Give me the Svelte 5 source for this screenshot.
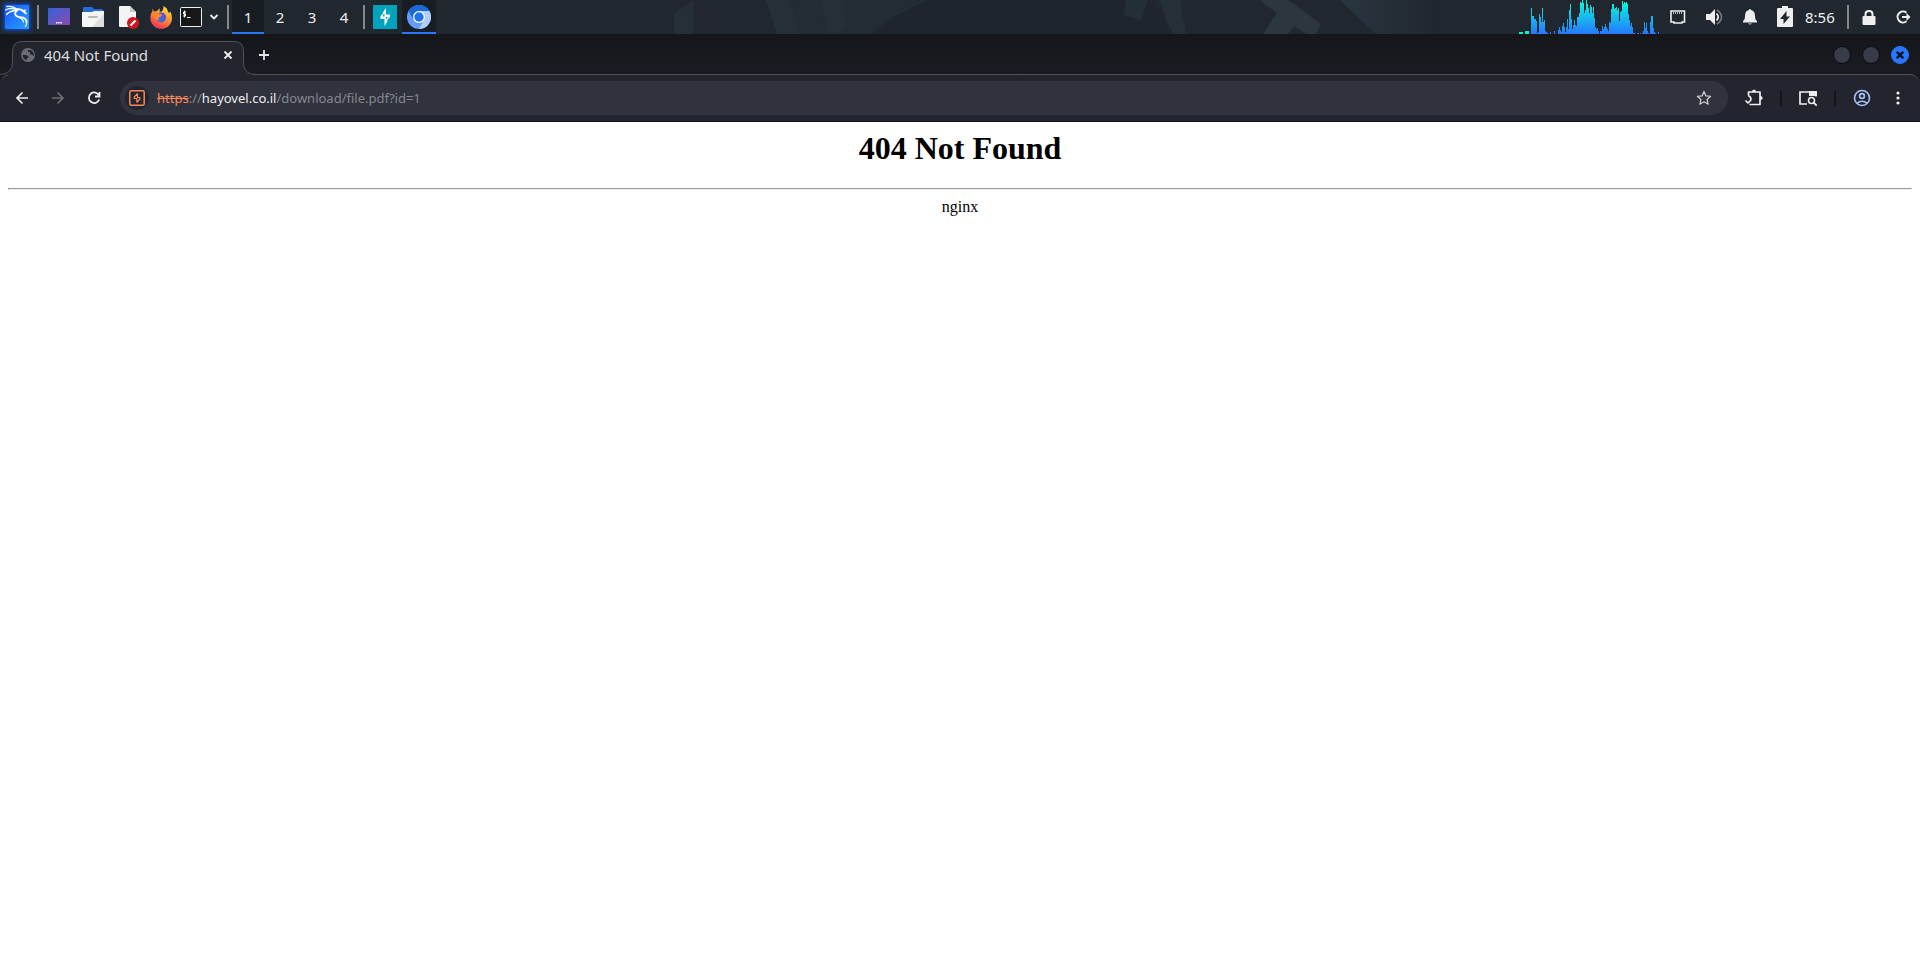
<script>
  // CPU graph samples, one pixel column each
  const load = [
    2, 2, 2, 2, 0, 0, 3, 3, 3, 3, 0, 0, 26, 18, 18, 15, 15, 13, 1, 2, 20, 17, 12, 26, 12, 14, 3, 2, 1, 0, 0, 2,
    0, 0, 0, 3, 0, 0, 0, 4, 7, 4, 2, 8, 11, 7, 2, 7, 15, 5, 24, 30, 15, 5, 9, 14, 9, 8, 17, 17, 21, 32, 31, 34,
    31, 21, 24, 34, 30, 26, 21, 29, 27, 21, 27, 16, 7, 5, 6, 3, 0, 3, 3, 8, 5, 7, 10, 7, 5, 3, 12, 11, 25, 30,
    30, 25, 26, 27, 24, 26, 13, 22, 23, 33, 30, 32, 31, 32, 30, 20, 14, 8, 11, 7, 1, 1, 0, 0, 1, 1, 0, 1, 0, 1,
    3, 12, 6, 11, 3, 1, 0, 12, 18, 18, 6, 2, 1, 0, 0, 2,
  ];

  const workspaces = [1, 2, 3, 4];
  let workspace = $state(1);
  let url = $state('https://hayovel.co.il/download/file.pdf?id=1');

  // Split the address so that scheme, host and path get their own colours
  let parts = $derived(url.match(/^(https?)?(:\/\/)?([^/]*)(.*)$/) ?? []);
</script>

<div class="desktop">
  <header class="panel">
    <svg class="wallpaper" width="1920" height="34" aria-hidden="true">
      <defs>
        <linearGradient id="ridge"><stop stop-color="#293640" /><stop offset="1" stop-color="#20262e" /></linearGradient>
      </defs>
      <path fill="#212d32" d="M790 0h140q-34 12-58 34h-72Z" />
      <path fill="#242f37" d="M674 14 693 0V34H674ZM766 0h24l10 34h-23ZM820 0h20l8 25-19 13ZM1160 0h20l6 34h-16Z" />
      <path fill="#1e252d" d="M872 34Q896 12 930 0h219q16 14 24 34Z" />
      <path fill="#242e36" d="M1126 0h22l-7 21-17-6Z" />
      <path fill="#2c363f" d="M1259 0h29l33 24-5 10h-10l-12-8-6 8h-25l14-21Z" />
      <path fill="url(#ridge)" d="M1340 0h100v34h-64Z" />
    </svg>

    <button class="launcher" aria-label="Applications">
      <svg width="34" height="34" viewBox="0 0 34 34">
        <defs>
          <linearGradient id="kali" x2="1" y2="1"><stop stop-color="#1558ff" /><stop offset="1" stop-color="#2aa0ff" /></linearGradient>
          <filter id="glow" x="-30%" y="-30%" width="160%" height="160%"><feGaussianBlur stdDeviation="2" /></filter>
        </defs>
        <rect x="4" y="4" width="26" height="26" fill="#0c52e8" filter="url(#glow)" />
        <rect x="5" y="5" width="24" height="24" rx="1" fill="url(#kali)" />
        <g fill="none" stroke="#fff" stroke-linecap="round">
          <path stroke-width="1.300" d="M7 6.500Q13 5.500 18 10M5.500 10Q11 7 17 10M6.500 14.500Q10 10.500 17 10.500" />
          <path stroke-width="1.800" d="M16 9.500Q20.500 8.500 23 11L26 13.500M22.500 11l2.500-.5" />
          <path stroke-width="1.900" d="M17 10.500Q13.500 13.500 16.500 16Q18.500 17.500 22 17.500Q26.500 18.500 26.500 22" />
          <path stroke-width="1.200" d="M26.500 21Q27 24 25.500 26.500M19 17.500Q23 19 23.500 22" />
        </g>
      </svg>
    </button>
    <span class="divider"></span>
    <button class="launcher" aria-label="Show desktop">
      <svg width="24" height="24" viewBox="0 0 24 24">
        <defs><linearGradient id="desk" x2="1" y2="1"><stop stop-color="#3362d8" /><stop offset="1" stop-color="#8a4aae" /></linearGradient></defs>
        <rect x="1" y="3" width="22" height="17" rx="1" fill="url(#desk)" />
        <path stroke="#fff" stroke-width="1.500" stroke-dasharray="1.500 .7" d="M9 17.800h6.500" />
      </svg>
    </button>
    <button class="launcher" aria-label="Files">
      <svg width="24" height="24" viewBox="0 0 24 24">
        <path fill="#2869d8" d="M2 8V3q0-1 1-1h8l2 2h8q1 0 1 1v4Z" />
        <path fill="#f5f5f5" d="M1 7h10l2-1h10v15q0 1-1 1H2q-1 0-1-1Z" />
        <path fill="#dedede" d="m23 9-12 13h11q1 0 1-1Z" />
        <rect x="7" y="11" width="10" height="2" rx="1" fill="#b8b8b8" />
      </svg>
    </button>
    <button class="launcher" aria-label="Text editor">
      <svg width="24" height="24" viewBox="0 0 24 24">
        <path fill="#f4f4f4" d="M5 1h10l6 6v15H5q-1 0-1-1V2q0-1 1-1Z" />
        <path fill="#c9c9c9" d="M15 1v6h6Z" />
        <circle cx="18" cy="18" r="6" fill="#d0161b" />
        <path stroke="#fff" stroke-width="2.200" d="m15.500 20.500 5-5" />
      </svg>
    </button>
    <button class="launcher" aria-label="Firefox">
      <svg width="24" height="24" viewBox="0 0 24 24">
        <defs><linearGradient id="fox" x1=".85" x2=".3" y2="1"><stop stop-color="#fff04a" /><stop offset=".45" stop-color="#ff962e" /><stop offset="1" stop-color="#f52e56" /></linearGradient></defs>
        <path fill="url(#fox)" d="M3.500 3.500 5 6.500l3-.5q1-2 3-2.500-1 2 0 3.500 4-1 3.500-6 4 2 4.500 6l1.500 1 .5-2q2 3 2 7a10.800 10.800 0 0 1-21.600 0q0-5 1.900-6Z" />
        <circle cx="12" cy="12.500" r="5" fill="#4564df" />
        <path fill="#ff872b" d="M4 8.500q4-2 6.500.5l3 .5q-.5 2-3 2.500-2 1.500 0 3.500-5 0-6.500-7Z" />
        <path fill="#5e50d6" d="M11 8q5-1 6 4l-3 5q3-5-3-9Z" />
      </svg>
    </button>
    <button class="launcher terminal" aria-label="Terminal">
      <svg width="24" height="24" viewBox="0 0 24 24">
        <rect x="1.500" y="2.500" width="21" height="19" rx="1" fill="#171717" stroke="#eee" />
        <path fill="none" stroke="#fff" d="M7 7H4.500v2H6.500v2H4M5.600 5.500v7M8 12.500h3.500" />
      </svg>
    </button>
    <button class="launcher more" aria-label="More terminals">
      <svg width="12" height="12" viewBox="0 0 12 12"><path fill="none" stroke="#eee" stroke-width="1.800" d="m2.500 4 3.500 3.500L9.500 4" /></svg>
    </button>
    <span class="divider"></span>
    {#each workspaces as n}
      <button class="workspace" class:active={workspace === n} onclick={() => (workspace = n)}>{n}</button>
    {/each}
    <span class="divider"></span>
    <button class="launcher" aria-label="Burp Suite">
      <svg width="24" height="24" viewBox="0 0 24 24">
        <path fill="#00a3bd" d="M0 0h24v24H0Z" />
        <path fill="#fff" d="M13 3v6.500h4v2.500l-3.500 3.500h1.500L11.500 21V14H7.500v-3l3-3H9.500Z" />
        <path fill="#00a3bd" d="M11.500 8v3.500H9.200ZM13 12h2.200L13 14.500Z" />
      </svg>
    </button>
    <button class="launcher active" aria-label="Chromium">
      <svg width="24" height="24" viewBox="0 0 24 24">
        <circle cx="12" cy="12" r="12" fill="#659cf5" />
        <path fill="#1b68d8" d="M1.600 6A12 12 0 0 1 22.400 6H12L6.800 15Z" />
        <path fill="#b1cefb" d="M12 6h10.400A12 12 0 0 1 12 24l5.200-9Z" />
        <circle cx="12" cy="12" r="6" fill="#fff" />
        <circle cx="12" cy="12" r="4.700" fill="#1c74ea" />
      </svg>
    </button>

    <div class="tray">
      <svg class="cpu" width="143" height="34" aria-hidden="true">
        <defs>
          <linearGradient id="cpu" gradientUnits="userSpaceOnUse" x1="0" y1="0" x2="0" y2="34"><stop stop-color="#05ffdc" /><stop offset="1" stop-color="#2777ff" /></linearGradient>
        </defs>
        {#each load as h, i}
          <rect x={i} y={34 - h} width="1" height={h} fill={i < 10 ? '#0df0c8' : 'url(#cpu)'} />
        {/each}
      </svg>
      <button class="status" aria-label="Network">
        <svg width="24" height="24" viewBox="0 0 24 24">
          <path fill="none" stroke="#eee" stroke-width="1.600" d="M3 6h13.500v11H14v1H6v-1H3Z" />
          <path stroke="#bbb" d="M5.500 7v2M7.500 7v2M9.500 7v2M11.500 7v2M13.500 7v2" />
        </svg>
      </button>
      <button class="status" aria-label="Volume">
        <svg width="24" height="24" viewBox="0 0 24 24">
          <path fill="#eee" d="M3 9h4l5-5v16l-5-5H3Z" />
          <path fill="none" stroke="#eee" stroke-width="1.700" d="M13.500 8.500q3.500 3.500 0 7" />
          <path fill="none" stroke="#777c80" stroke-width="1.600" d="M14 4.800q9 7 0 14.400" />
        </svg>
      </button>
      <button class="status" aria-label="Notifications">
        <svg width="24" height="24" viewBox="0 0 24 24"><path fill="#eee" d="M11 5q0-1 1-1t1 1q4 .7 4 6 0 4 2 5v1.500H5V16q2-1 2-5 0-5.300 4-6ZM10 18.500h4q-2 2-4 0Z" /></svg>
      </button>
      <button class="status" aria-label="Battery">
        <svg width="24" height="24" viewBox="0 0 24 24">
          <path fill="#eee" d="M9 1h6v2h4q1 0 1 1v17q0 1-1 1H5q-1 0-1-1V4q0-1 1-1h4Z" />
          <path fill="#20272f" d="M13.500 6v5.500h3.500L10.500 19v-5H7Z" />
        </svg>
      </button>
      <time class="clock">8:56</time>
      <span class="divider"></span>
      <button class="launcher" aria-label="Lock screen">
        <svg width="24" height="24" viewBox="0 0 24 24">
          <rect x="5.500" y="11" width="13" height="9" rx="1" fill="#eee" />
          <path fill="none" stroke="#eee" stroke-width="2" d="M8.500 12V9q0-3 3.500-3t3.500 3v3" />
        </svg>
      </button>
      <button class="launcher" aria-label="Log out">
        <svg width="24" height="24" viewBox="0 0 24 24">
          <path fill="none" stroke="#eee" stroke-width="2" d="M15.500 7.700A5.500 5.500 0 1 0 15.500 16.300M11 12h6" />
          <path fill="#eee" d="m15.500 8 4 4-4 4Z" />
        </svg>
      </button>
    </div>
  </header>

  <div class="tabstrip">
    <div class="tab">
      <svg class="tab-shape" width="256" height="42" viewBox="0 0 256 42" aria-hidden="true">
        <path fill="#23252e" stroke="#50525a" d="M-1 40.500Q12.500 40.500 12.500 28V17.500Q12.500 7.500 22.500 7.500H234Q243.500 7.500 243.500 17V29Q243.500 40.500 256 40.500" />
        <path fill="#23252e" d="M8 40h244v2H8Z" />
      </svg>
      <svg class="globe" width="14" height="14" viewBox="0 0 14 14" aria-hidden="true">
        <circle cx="7" cy="7" r="7" fill="#6b6d73" />
        <path fill="#23252e" d="M1.500 7h3q3 0 3 3H6v2Q2 11.500 1.500 7ZM7 2v2h2v2.500h2q.5 1.500 2 1 0-4-3.500-5.500Z" />
      </svg>
      <span class="tab-title">404 Not Found</span>
      <button class="tab-close" aria-label="Close tab">
        <svg width="10" height="10" viewBox="0 0 10 10"><path stroke="#eee" stroke-width="1.800" d="m1.500 1.500 7 7m0-7-7 7" /></svg>
      </button>
    </div>
    <button class="new-tab" aria-label="New tab">
      <svg width="12" height="12" viewBox="0 0 12 12"><path stroke="#e4e4e4" stroke-width="1.800" d="M6 1v10M1 6h10" /></svg>
    </button>
    <div class="window-buttons">
      <button aria-label="Minimize"></button>
      <button aria-label="Maximize"></button>
      <button class="close" aria-label="Close window">
        <svg width="8" height="8" viewBox="0 0 8 8"><path stroke="#0d1220" stroke-width="2.400" d="m.8.8 6.400 6.400m0-6.400L.8 7.200" /></svg>
      </button>
    </div>
  </div>

  <nav class="toolbar">
    <button aria-label="Back">
      <svg width="16" height="16" viewBox="0 0 16 16"><path fill="none" stroke="#eee" stroke-width="1.700" d="M14 8H3m5.500-5.500L3 8l5.500 5.500" /></svg>
    </button>
    <button aria-label="Forward" disabled>
      <svg width="16" height="16" viewBox="0 0 16 16"><path fill="none" stroke="#6c6e75" stroke-width="1.700" d="M2 8h11M7.500 2.500 13 8l-5.500 5.500" /></svg>
    </button>
    <button aria-label="Reload">
      <svg width="16" height="16" viewBox="0 0 16 16">
        <path fill="none" stroke="#eee" stroke-width="1.800" d="M13 5.500A5.300 5.300 0 1 0 13.200 9.500M13.500 2v4.500H9" />
      </svg>
    </button>
    <div class="omnibox">
      <span class="site-icon">
        <svg width="16" height="16" viewBox="0 0 16 16" aria-hidden="true">
          <rect x=".8" y=".8" width="14.400" height="14.400" rx="1.500" fill="none" stroke="#f78859" stroke-width="1.500" />
          <path fill="none" stroke="#f78859" stroke-width="1.200" d="M8.500 3.500 5.200 7v1.500h2.600v4M8.500 3.500v4h2.300V9L7.800 12.500" />
        </svg>
      </span>
      <div class="address">
        <input aria-label="Address and search bar" spellcheck="false" bind:value={url} />
        <div class="address-text" aria-hidden="true"><s>{parts[1]}</s>{parts[2]}<b>{parts[3]}</b>{parts[4]}</div>
      </div>
      <button class="bookmark" aria-label="Bookmark this tab">
        <svg width="16" height="16" viewBox="0 0 16 16">
          <path fill="none" stroke="#c9cacd" stroke-width="1.300" stroke-linejoin="round" d="m8 1.500 1.900 4.400 4.700.4-3.500 3.200 1 4.700L8 11.800l-4.100 2.400 1-4.700L1.400 6.300l4.700-.4Z" />
        </svg>
      </button>
    </div>
    <button aria-label="Extensions">
      <svg width="20" height="20" viewBox="0 0 20 20">
        <path fill="none" stroke="#eee" stroke-width="1.700" stroke-linejoin="round" d="M4.500 7.500V4H16v12.500H5.500M4.500 7.500Q8 10 6.500 12.500L4 15 1.500 12.500" />
        <path fill="#eee" d="M8 4q0-2.500 2-2.500T12 4ZM16 8q2.700 0 2.700 2T16 12Z" />
      </svg>
    </button>
    <span class="rule"></span>
    <button aria-label="Search side panel">
      <svg width="20" height="20" viewBox="0 0 20 20">
        <path fill="none" stroke="#eee" stroke-width="1.700" d="M9 16H2V4h16v4.500" />
        <path fill="#eee" d="M11 3h8v5h-8Z" />
        <circle cx="13.500" cy="12.500" r="3" fill="#23252e" stroke="#eee" stroke-width="1.600" />
        <path stroke="#eee" stroke-width="1.800" d="m15.500 14.500 3.200 3.200" />
      </svg>
    </button>
    <span class="rule"></span>
    <button aria-label="Profile">
      <svg width="18" height="18" viewBox="0 0 18 18">
        <g fill="none" stroke="#a4c2f8" stroke-width="1.600"><circle cx="9" cy="9" r="7.500" /><circle cx="9" cy="7" r="2.400" /><path d="M3.800 14.200q5.200-4 10.400 0" /></g>
      </svg>
    </button>
    <button aria-label="Menu">
      <svg width="4" height="16" viewBox="0 0 4 16"><g fill="#eee"><circle cx="2" cy="3" r="1.600" /><circle cx="2" cy="8" r="1.600" /><circle cx="2" cy="13" r="1.600" /></g></svg>
    </button>
  </nav>

  <main>
    <h1>404 Not Found</h1>
    <hr />
    <p>nginx</p>
  </main>
</div>

<style>
  :global(body) {
    background: #fff;
  }

  .desktop {
    background: #191a1f;
    color: #eee;
    font-family: 'Noto Sans', sans-serif;
  }

  button {
    display: flex;
    align-items: center;
    justify-content: center;
    flex-shrink: 0;
    padding: 0;
    border: 0;
    background: none;
    color: inherit;
    font: inherit;
  }

  .panel {
    position: relative;
    display: flex;
    height: 34px;
    overflow: hidden;
    background: #20272f;
  }

  .wallpaper {
    position: absolute;
    inset: 0;
  }

  .launcher {
    position: relative;
    width: 34px;
  }

  .terminal {
    width: 26px;
  }

  .more {
    width: 20px;
  }

  .workspace {
    width: 32px;
    font-size: 15px;
  }

  .active {
    background: #181d24;
    box-shadow: inset 0 -2px #2777ff;
  }

  .divider {
    flex-shrink: 0;
    align-self: center;
    width: 2px;
    height: 24px;
    margin: 0 3px;
    background: #858789;
  }

  .tray {
    position: relative;
    display: flex;
    margin-left: auto;
  }

  .status {
    width: 35px;
  }

  .clock {
    width: 39px;
    padding-left: 3px;
    font-size: 15px;
    line-height: 34px;
  }

  .tabstrip {
    display: flex;
    align-items: center;
    height: 38px;
    padding-top: 2px;
    background: linear-gradient(#15161a, #1b1c22);
  }

  .tab {
    position: relative;
    display: flex;
    align-items: center;
    box-sizing: border-box;
    width: 256px;
    height: 42px;
    padding: 0 22px 0 21px;
  }

  .tab-shape {
    position: absolute;
    top: 0;
    left: 0;
  }

  .globe,
  .tab-title,
  .tab-close {
    position: relative;
  }

  .tab-title {
    flex: 1;
    margin-left: 9px;
    font-size: 15px;
    line-height: 20px;
    color: #dcdddf;
  }

  .tab-close {
    width: 12px;
    height: 20px;
  }

  .new-tab {
    width: 16px;
    height: 20px;
  }

  .window-buttons {
    display: flex;
    gap: 11px;
    margin-left: auto;
    padding-right: 11px;
  }

  .window-buttons button {
    box-sizing: border-box;
    width: 18px;
    height: 18px;
    border: 1px solid #090a0d;
    border-radius: 50%;
    background: #383c4a;
  }

  .window-buttons .close {
    border-color: #2777ff;
    background: #2777ff;
  }

  .toolbar {
    display: flex;
    align-items: center;
    height: 46px;
    padding: 0 4px;
    border-top: 1px solid #50525a;
    border-bottom: 1px solid #0c0d12;
    border-radius: 10px 10px 0 0;
    background: #23252e;
  }

  .toolbar button {
    width: 36px;
    height: 34px;
  }

  .omnibox {
    display: flex;
    flex: 1;
    align-items: center;
    height: 34px;
    margin: 0 8px;
    padding: 0 6px 0 5px;
    border-radius: 17px;
    background: #30323d;
  }

  .site-icon {
    display: flex;
    align-items: center;
    justify-content: center;
    width: 24px;
    height: 24px;
    border-radius: 50%;
    background: #23252e;
  }

  .address {
    position: relative;
    flex: 1;
    margin-left: 8px;
    font-size: 13px;
    line-height: 24px;
  }

  .address input {
    display: block;
    box-sizing: border-box;
    width: 100%;
    height: 24px;
    padding: 0;
    border: 0;
    outline: 0;
    background: none;
    color: transparent;
    caret-color: #eee;
    font: inherit;
  }

  .address-text {
    position: absolute;
    inset: 0;
    color: #85878e;
    white-space: pre;
    pointer-events: none;
  }

  .address-text s {
    color: #f78859;
  }

  .address-text b {
    color: #eee;
    font-weight: 400;
  }

  .rule {
    width: 2px;
    height: 16px;
    margin: 0 8px;
    background: #16171d;
  }

  main {
    padding: 8px;
    background: #fff;
    color: #000;
    font-family: 'Liberation Serif', serif;
    font-size: 16px;
    line-height: 18px;
    text-align: center;
  }

  h1 {
    margin: 0 0 21px;
    font-size: 32px;
    line-height: 37px;
  }

  hr {
    margin: 0 0 8px;
  }

  p {
    margin: 0;
  }
</style>
